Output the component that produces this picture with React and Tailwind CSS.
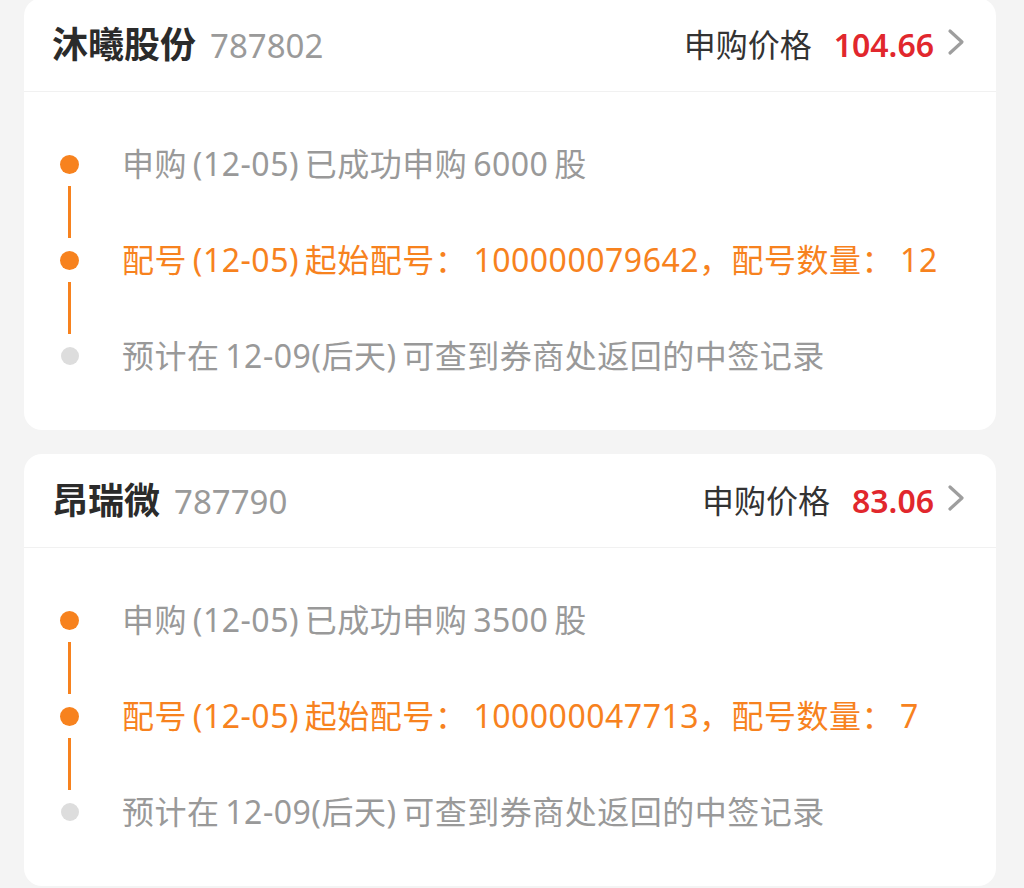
const stocks = [
  {
    name: '沐曦股份',
    code: '787802',
    price: '104.66',
    shares: '6000',
    start: '100000079642',
    count: '12',
  },
  {
    name: '昂瑞微',
    code: '787790',
    price: '83.06',
    shares: '3500',
    start: '100000047713',
    count: '7',
  },
]

function Chevron() {
  return (
    <svg width="18" height="28" viewBox="0 0 18 28" fill="none" className="mb-[6px] ml-[13px]">
      <path d="M3 3 L15 14 L3 25" stroke="#9e9e9e" strokeWidth="3.2" strokeLinecap="round" strokeLinejoin="round" />
    </svg>
  )
}

function Connector() {
  return (
    <div className="flex h-[52px]">
      <div className="flex w-[19px] justify-center">
        <div className="h-full w-[3px] bg-[#f7821e]" />
      </div>
    </div>
  )
}

function Row({ dot, children, className }) {
  return (
    <div className="flex h-[44px] items-center gap-[43px]">
      <div className="flex w-[19px] justify-center">
        {dot === 'on' ? (
          <div className="h-[19px] w-[19px] rounded-full bg-[#f7821e]" />
        ) : (
          <div className="h-[18px] w-[18px] rounded-full bg-[#dddddd]" />
        )}
      </div>
      <div className={'whitespace-nowrap text-[32px] tracking-[0.5px] [word-spacing:-3px] ' + className}>
        {children}
      </div>
    </div>
  )
}

function StockCard({ stock }) {
  return (
    <div className="rounded-[18px] bg-white">
      <div className="flex h-[94px] items-center justify-between border-b border-[#f1f1f1] pl-[28px] pr-[31px]">
        <div className="flex items-baseline gap-[14px]">
          <span className="text-[36px] font-semibold text-[#2b2b2b]">{stock.name}</span>
          <span className="text-[33px] text-[#9a9a9a]">{stock.code}</span>
        </div>
        <div className="flex items-center">
          <span className="text-[32px] text-[#333333]">申购价格</span>
          <span className="ml-[22px] text-[32px] font-semibold text-[#e1272d]">{stock.price}</span>
          <Chevron />
        </div>
      </div>
      <div className="pb-[52px] pl-[36px] pt-[50px]">
        <Row dot="on" className="text-[#999999]">
          申购 (12-05) 已成功申购 {stock.shares} 股
        </Row>
        <Connector />
        <Row dot="on" className="text-[#f7821e]">
          配号 (12-05) 起始配号<span className="mr-[6px]">：</span>{stock.start}，配号数量<span className="mr-[6px]">：</span>{stock.count}
        </Row>
        <Connector />
        <Row dot="off" className="text-[#999999]">
          预计在 12-09(后天) 可查到券商处返回的中签记录
        </Row>
      </div>
    </div>
  )
}

export default function App() {
  return (
    <div
      className="min-h-screen bg-[#f4f4f4] pl-6 pr-7"
      style={{ fontFamily: '"Noto Sans", "Noto Sans CJK SC", sans-serif' }}
    >
      <div className="-mt-[2px] flex flex-col gap-6 pb-6">
        {stocks.map((s) => (
          <StockCard key={s.code} stock={s} />
        ))}
      </div>
    </div>
  )
}
